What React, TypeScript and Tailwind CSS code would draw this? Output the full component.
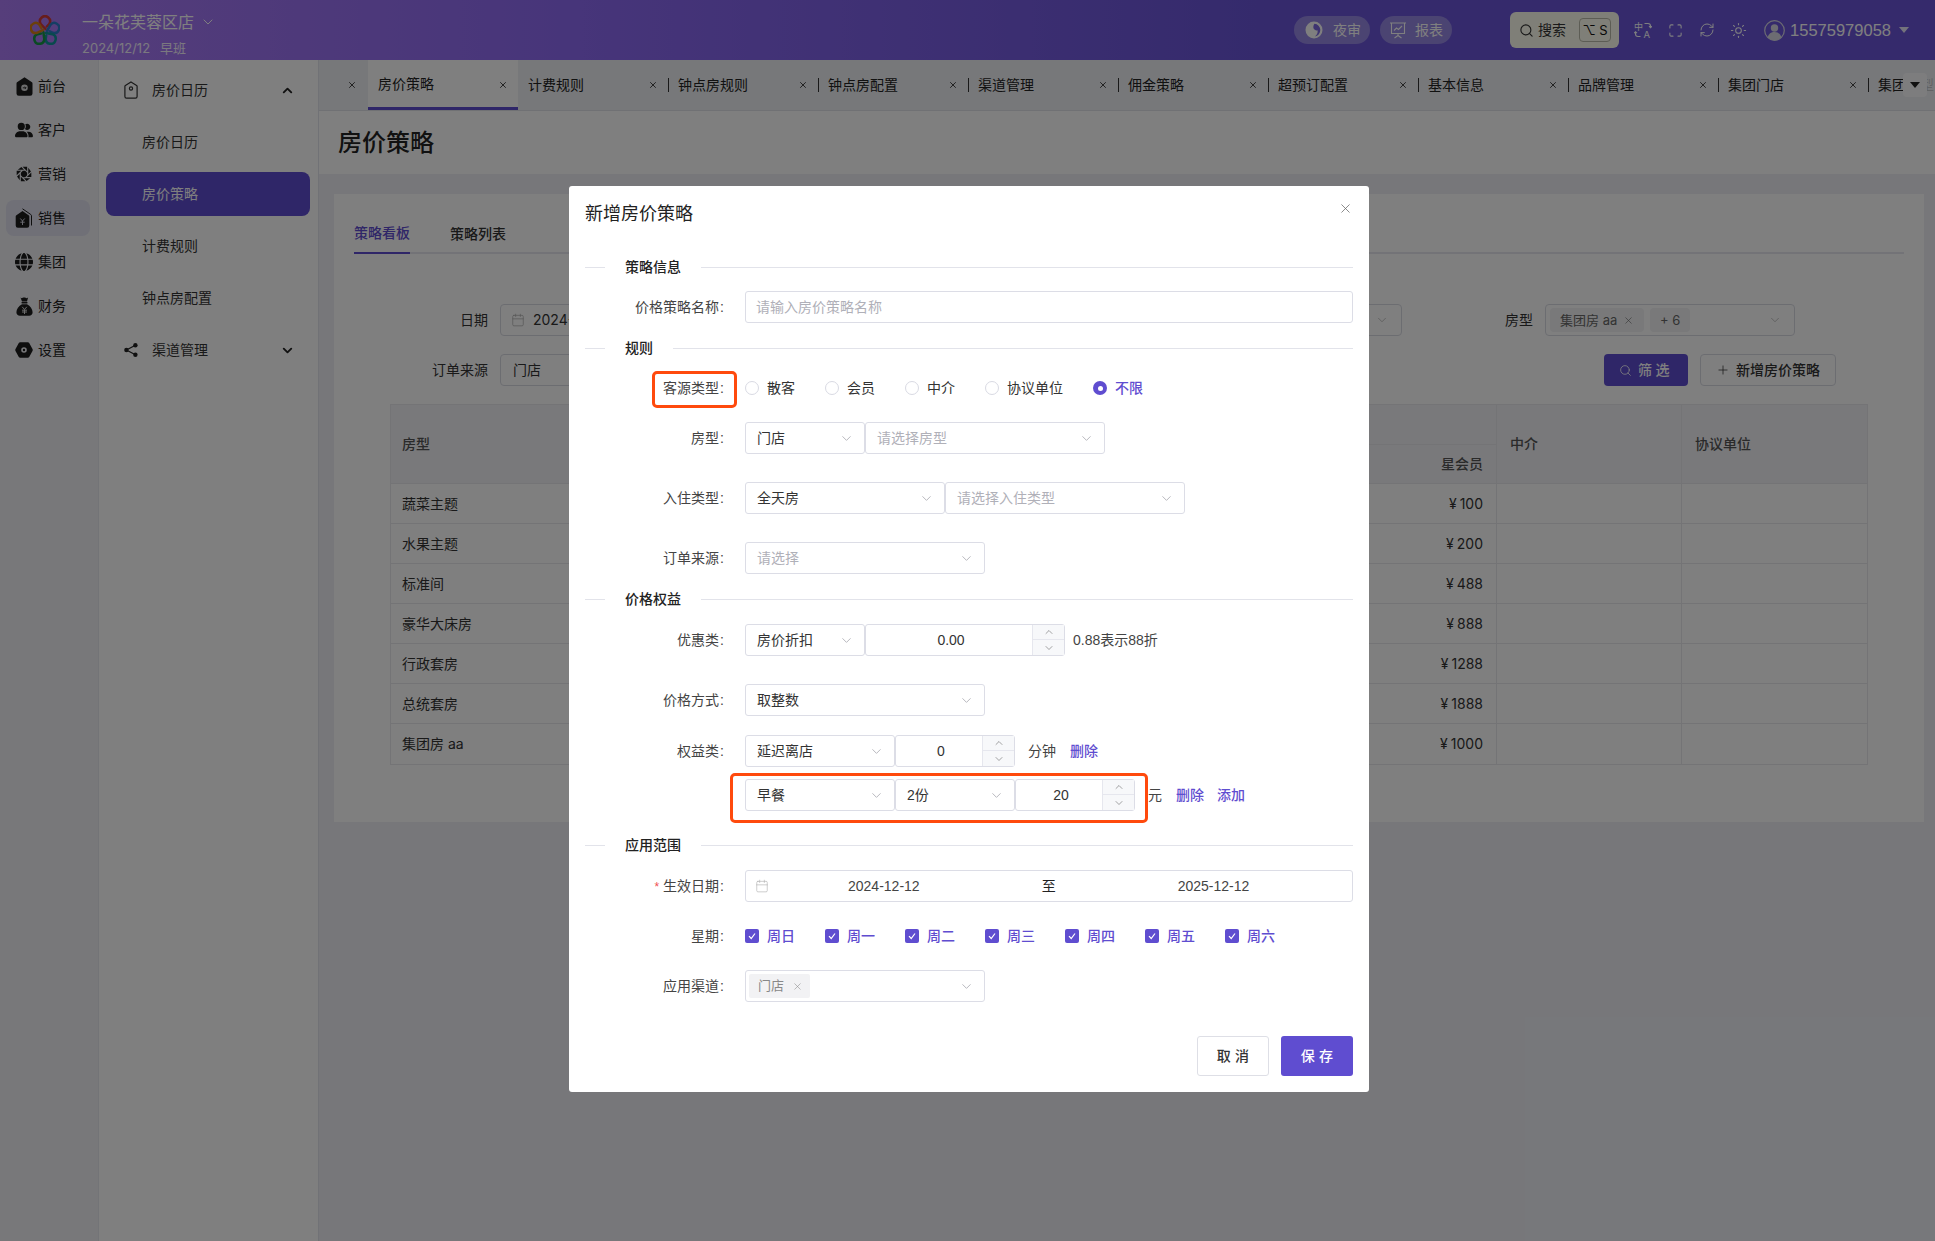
import React from "react";
import { ChevronDown, ChevronUp, Calendar, Maximize, RefreshCw, Sun, Search, X, Plus } from "lucide-react";
import { FaUserGroup, FaGlobe } from "react-icons/fa6";
import { IoApertureSharp } from "react-icons/io5";

function Logo() {
  const colors = ["#d03a38", "#2a7cc8", "#10929a", "#159446", "#d67f1a"];
  return (
    <svg width="30" height="30" viewBox="0 0 30 30" fill="none">
      {colors.map((c, i) => (
        <path key={c} transform={`rotate(${i * 72} 15 16)`} d="M15.500 14 10.800 9A5 5 0 1 1 19.200 9L16.800 11.500" stroke={c} strokeWidth="2.500" strokeLinecap="round" />
      ))}
    </svg>
  );
}

function HomeTag() {
  return (
    <svg width="17" height="19" viewBox="0 0 17 19" fill="#1c1c1c">
      <path d="M8.500 0.300 15.600 5a1.600 1.600 0 0 1 .9 1.400V16.500a2.300 2.300 0 0 1-2.300 2.300H2.800A2.300 2.300 0 0 1 .5 16.500V6.400A1.600 1.600 0 0 1 1.400 5Z" />
      <circle cx="8.500" cy="10.800" r="3.300" fill="#d8d8d8" />
      <path d="M6.800 10.800h3M8.800 9.600l1.200 1.200-1.200 1.200" stroke="#1c1c1c" strokeWidth=".9" fill="none" />
    </svg>
  );
}

function SaleTag() {
  return (
    <svg width="18" height="20" viewBox="0 0 18 20" fill="#1c1c1c">
      <path d="M7.500 3 13.600 7.200a1.500 1.500 0 0 1 .7 1.300V17.500a2.200 2.200 0 0 1-2.200 2.200H2.900A2.200 2.200 0 0 1 .7 17.500V8.500a1.500 1.500 0 0 1 .7-1.300Z" />
      <path d="M7.500 .8 15.800 6.500a1.500 1.500 0 0 1 .7 1.300V17.500" stroke="#1c1c1c" strokeWidth="1" fill="none" />
      <path d="M5.300 10.500 7.500 13l2.200-2.500M5.300 14.200h4.400M7.500 13v4" stroke="#d0d0dc" strokeWidth="1" fill="none" />
    </svg>
  );
}

function MoneyBag() {
  return (
    <svg width="17" height="19" viewBox="0 0 17 19" fill="#1c1c1c">
      <path d="M4.500.6c1 .7 1.500.7 2.100.2.900-.5 2.100-.5 3 0 .6.500 1.300.5 2.500-.2L11 4.500H6Z" />
      <rect x="5.400" y="5" width="6.200" height="1.500" rx=".7" />
      <path d="M6 7.300h5c3.300 1.800 5.600 4.800 5.600 8 0 2.200-1.500 3.400-3.500 3.400H3.900c-2 0-3.500-1.200-3.500-3.400 0-3.200 2.300-6.200 5.600-8Z" />
      <path d="M6.200 9.800 8.500 12.500l2.300-2.700M6 13.200h5M6 15h5M8.500 12.500V17" stroke="#d8d8d8" strokeWidth="1" fill="none" />
    </svg>
  );
}

function Hex() {
  return (
    <svg width="18" height="16" viewBox="0 0 18 16">
      <path fillRule="evenodd" fill="#1c1c1c" d="M5.200.3h7.600c.6 0 1.100.3 1.400.8l3.300 5.800c.4.700.4 1.500 0 2.200l-3.300 5.800c-.3.500-.8.800-1.400.8H5.200c-.6 0-1.100-.3-1.400-.8L.5 9.100c-.4-.7-.4-1.500 0-2.200L3.800 1.100c.3-.5.8-.8 1.400-.8ZM9 5.200a2.800 2.800 0 1 0 0 5.600 2.800 2.800 0 0 0 0-5.600Z" />
      <circle cx="9" cy="8" r="1.200" fill="#1c1c1c" />
    </svg>
  );
}

function OutlineTag() {
  return (
    <svg width="14" height="18" viewBox="0 0 14 18" fill="none" stroke="#333" strokeWidth="1.200">
      <path d="M7 1l5.600 3.400c.3.200.5.500.5.900V15.500a1.600 1.600 0 0 1-1.600 1.600h-9A1.600 1.600 0 0 1 .9 15.500V5.300c0-.4.200-.7.500-.9Z" />
      <circle cx="7" cy="7.500" r="1.600" />
    </svg>
  );
}

function ShareIcon() {
  return (
    <svg width="14" height="14" viewBox="0 0 14 14" fill="#222">
      <circle cx="2.400" cy="7" r="2.200" />
      <circle cx="11.400" cy="2.200" r="2.200" />
      <circle cx="11.400" cy="11.800" r="2.200" />
      <path d="M2.400 7 11.400 2.200M2.400 7l9 4.800" stroke="#222" strokeWidth="1.300" />
    </svg>
  );
}

function NightIcon() {
  return (
    <svg width="18" height="18" viewBox="0 0 18 18">
      <circle cx="9" cy="9" r="8.500" fill="#fff" />
      <path d="M9.500 2.700a6.400 6.400 0 0 1 .4 12.700c1.800-1.200 3.100-3.500 2.700-6.200C11 9.800 9.500 9 8.600 7.600 8 6 8.500 4 9.500 2.700Z" fill="#7d69e0" />
    </svg>
  );
}

function ReportIcon() {
  return (
    <svg width="18" height="18" viewBox="0 0 18 18" fill="none" stroke="#fff" strokeWidth="1.100">
      <path d="M1 2h16M2.500 2v10.500h13V2M9 12.500v2M5.500 17 9 14.500 12.500 17" />
      <path d="M5 9.500 7.500 7l2 1.500L13 5" />
    </svg>
  );
}

function TranslateIcon() {
  return (
    <svg width="18" height="18" viewBox="0 0 18 18" fill="none" stroke="#fff" strokeWidth="1.100">
      <text x="0" y="8.500" fontSize="9" fill="#fff" stroke="none">中</text>
      <text x="9.500" y="17" fontSize="9.500" fill="#fff" stroke="none">A</text>
      <path d="M10.500 2.500h3.500c1.500 0 2.500 1 2.500 2.500v1.500M15 5.200l1.500 1.500L18 5.200" />
      <path d="M6.500 15.500H4c-1.500 0-2.500-1-2.500-2.500v-2M0 12.200l1.500-1.500L3 12.200" />
    </svg>
  );
}

function Avatar() {
  return (
    <svg width="21" height="21" viewBox="0 0 21 21" fill="none">
      <circle cx="10.500" cy="10.500" r="9.800" stroke="#d8d8e4" strokeWidth="1.200" />
      <circle cx="10.500" cy="8" r="3.700" fill="#d8d8e4" />
      <path d="M3.700 17.500c.7-3.700 3.500-5.500 6.800-5.500s6.100 1.800 6.800 5.500a9.400 9.400 0 0 1-13.600 0Z" fill="#d8d8e4" />
    </svg>
  );
}

const railItems: { label: string; icon: React.ReactNode; active?: boolean }[] = [
  { label: "前台", icon: <HomeTag /> },
  { label: "客户", icon: <FaUserGroup size={18} color="#1c1c1c" /> },
  { label: "营销", icon: <IoApertureSharp size={20} color="#1c1c1c" /> },
  { label: "销售", icon: <SaleTag />, active: true },
  { label: "集团", icon: <FaGlobe size={18} color="#1c1c1c" /> },
  { label: "财务", icon: <MoneyBag /> },
  { label: "设置", icon: <Hex /> },
];

function Rail() {
  return (
    <aside className="w-[99px] shrink-0 bg-[#f0f1f5] border-r border-[#e6e8ee] pt-1 flex flex-col">
      {railItems.map((it) => (
        <div key={it.label} className="h-11 flex items-center pl-[6px]">
          <div className={`w-[84px] h-9 rounded-lg flex items-center ${it.active ? "bg-[#e0e0ef]" : ""}`}>
            <span className="w-[18px] ml-[9px] flex justify-center shrink-0">{it.icon}</span>
            <span className="ml-[5px] text-sm text-[#222]">{it.label}</span>
          </div>
        </div>
      ))}
    </aside>
  );
}

function SubNav() {
  const Sub = ({ label, active }: { label: string; active?: boolean }) => (
    <div className={`h-11 mt-2 ml-[7px] w-[204px] rounded-lg flex items-center pl-9 text-sm ${active ? "bg-[#5f4dd0] text-white" : "text-[#333]"}`}>{label}</div>
  );
  return (
    <aside className="w-[220px] shrink-0 bg-white border-r border-[#e3e5ec] pt-1">
      <div className="h-[44px] mt-1 flex items-center text-sm text-[#333]">
        <span className="w-[14px] ml-[25px] flex justify-center"><OutlineTag /></span>
        <span className="ml-[14px]">房价日历</span>
        <ChevronUp size={15} strokeWidth={3} className="ml-[72px] text-[#222]" />
      </div>
      <Sub label="房价日历" />
      <Sub label="房价策略" active />
      <Sub label="计费规则" />
      <Sub label="钟点房配置" />
      <div className="h-11 mt-2 flex items-center text-sm text-[#333]">
        <span className="w-[14px] ml-[25px] flex justify-center"><ShareIcon /></span>
        <span className="ml-[14px]">渠道管理</span>
        <ChevronDown size={15} strokeWidth={3} className="ml-[72px] text-[#222]" />
      </div>
    </aside>
  );
}

function Header() {
  return (
    <header className="h-[60px] shrink-0 flex items-center bg-linear-to-r from-[#ac7cf6] via-[#8e6af4] via-30% to-[#6a55d9] to-65% text-white">
      <div className="ml-[30px] w-[30px] shrink-0"><Logo /></div>
      <div className="ml-[22px] mt-2">
        <div className="flex items-center text-base leading-[22px] text-white">
          一朵花芙蓉区店
          <ChevronDown size={16} strokeWidth={1.500} className="ml-[6px]" />
        </div>
        <div className="mt-[6px] text-[13px] leading-[18px] text-white/90">2024/12/12<span className="ml-[10px]">早班</span></div>
      </div>
      <div className="ml-auto flex items-center">
        <div className="w-[76px] h-7 rounded-full bg-white/30 flex items-center pl-[11px] text-sm text-white">
          <NightIcon /><span className="ml-[10px]">夜审</span>
        </div>
        <div className="ml-[10px] w-[72px] h-7 rounded-full bg-white/30 flex items-center pl-[9px] text-sm text-white">
          <ReportIcon /><span className="ml-[8px]">报表</span>
        </div>
        <div className="ml-[58px] w-[109px] h-9 rounded-md bg-[#fffff0] flex items-center pl-[9px] text-sm text-[#333]">
          <Search size={15} strokeWidth={1.800} />
          <span className="ml-1">搜索</span>
          <span className="ml-[13px] w-8 h-6 rounded border border-[#bbbbaa] flex items-center justify-center text-[13px] text-[#111]">⌥ S</span>
        </div>
        <span className="ml-[15px] flex"><TranslateIcon /></span>
        <Maximize size={15} strokeWidth={1.700} className="ml-[16px] text-white" />
        <RefreshCw size={16} strokeWidth={1.500} className="ml-4 text-white" />
        <Sun size={17} strokeWidth={1.500} className="ml-[15px] text-white" />
        <span className="ml-[17px] flex"><Avatar /></span>
        <span className="ml-[5px] text-[16.500px] font-['Liberation_Sans',sans-serif] text-white">15575979058</span>
        <span className="ml-2 mr-[26px] w-0 h-0 border-x-[5px] border-x-transparent border-t-[6px] border-t-white/85" />
      </div>
    </header>
  );
}

const tabs = ["房价策略", "计费规则", "钟点房规则", "钟点房配置", "渠道管理", "佣金策略", "超预订配置", "基本信息", "品牌管理", "集团门店", "集团房型"];

function TabBar() {
  return (
    <div className="relative h-[51px] shrink-0 bg-[#eef0f4] border-b border-[#e0e2e8] flex overflow-hidden">
      <div className="w-[49px] shrink-0 flex items-center justify-end pr-[11px]"><X size={10} strokeWidth={2} className="text-[#222]" /></div>
      {tabs.map((t, i) => (
        <div key={t} className={`relative w-[150px] shrink-0 h-[50px] flex items-center pl-[10px] text-sm text-[#222] ${i === 0 ? "bg-white border-b-[3px] border-[#5f4dd0]" : ""}`}>
          {i > 1 && <span className="absolute left-0 top-[18px] h-[14px] w-px bg-[#333]" />}
          <span>{t}</span>
          <X size={10} strokeWidth={2} className="absolute left-[130px] top-5 text-[#222]" />
        </div>
      ))}
      <div className="absolute left-[1608px] top-0 right-0 h-[50px] bg-[#eef0f4]/80" />
      <div className="absolute left-[1584px] top-[13px] w-6 h-6 rounded bg-[#fbfbfc] flex items-center justify-center">
        <span className="w-0 h-0 border-x-[5px] border-x-transparent border-t-[6px] border-t-[#222]" />
      </div>
    </div>
  );
}

const rows = [
  ["蔬菜主题", "100"],
  ["水果主题", "200"],
  ["标准间", "488"],
  ["豪华大床房", "888"],
  ["行政套房", "1288"],
  ["总统套房", "1888"],
  ["集团房 aa", "1000"],
];

function PageSelect({ className, children }: { className: string; children?: React.ReactNode }) {
  return <div className={`h-8 rounded border border-[#d9dbe3] flex items-center text-sm text-[#333] ${className}`}>{children}</div>;
}

function Card() {
  return (
    <div className="mt-5 ml-[15px] mr-[11px] bg-white px-0 pt-5 pb-[57px]">
      <div className="mx-5 h-10 flex border-b-2 border-[#e6e7ef] text-sm">
        <div className="w-14 h-10 border-b-2 border-[#5f4dd0] text-[#5f4dd0] font-medium flex items-center">策略看板</div>
        <div className="ml-10 h-10 text-[#333] font-medium flex items-center">策略列表</div>
      </div>

      <div className="mt-[50px] flex items-center">
        <div className="w-[154px] text-right text-sm text-[#333]">日期</div>
        <PageSelect className="ml-3 w-[400px] pl-[10px] text-[#333]">
          <Calendar size={14} strokeWidth={1.200} className="text-[#aaa]" />
          <span className="ml-2">2024-12-12</span>
        </PageSelect>
        <PageSelect className="ml-[100px] w-[402px] justify-end pr-3"><ChevronDown size={14} strokeWidth={1.200} className="text-[#aaa]" /></PageSelect>
        <div className="w-[131px] text-right text-sm text-[#333]">房型</div>
        <PageSelect className="ml-3 w-[250px] pl-1 pr-[12px] text-[#666]">
          <span className="h-6 px-[10px] rounded-sm bg-[#f2f3f5] flex items-center text-[13px]">集团房 aa<X size={11} strokeWidth={1.300} className="ml-[6px]" /></span>
          <span className="ml-[6px] h-6 w-10 justify-center rounded-sm bg-[#f2f3f5] flex items-center text-[13px]">+ 6</span>
          <ChevronDown size={14} strokeWidth={1.200} className="ml-auto text-[#aaa]" />
        </PageSelect>
      </div>

      <div className="mt-[18px] flex items-center">
        <div className="w-[154px] text-right text-sm text-[#333]">订单来源</div>
        <PageSelect className="ml-3 w-[400px] pl-[12px]">门店</PageSelect>
        <button className="ml-auto w-[84px] h-8 rounded bg-[#5f4dd0] text-white text-sm font-medium flex items-center justify-center">
          <Search size={13} strokeWidth={1.500} /><span className="ml-[6px] tracking-[0.25em]">筛选</span>
        </button>
        <button className="ml-3 mr-[88px] w-[136px] h-8 rounded border border-[#d9dbe3] text-[#333] text-sm font-medium flex items-center justify-center">
          <Plus size={14} strokeWidth={1.300} /><span className="ml-[6px]">新增房价策略</span>
        </button>
      </div>

      <div className="mt-[18px] ml-[56px] mr-[56px] border border-[#e8e9ed] text-sm">
        <div className="h-[79px] grid grid-cols-[200px_906px_185px_1fr] bg-[#f2f3f6] border-b border-[#e8e9ed] text-[#555] font-medium">
          <div className="flex items-center pl-[11px]">房型</div>
          <div className="border-r border-[#e8e9ed] flex flex-col">
            <div className="h-10 border-b border-[#e8e9ed]" />
            <div className="flex-1 flex items-center justify-end pr-[13px]">星会员</div>
          </div>
          <div className="border-r border-[#e8e9ed] flex items-center pl-[13px]">中介</div>
          <div className="flex items-center pl-[13px]">协议单位</div>
        </div>
        {rows.map(([n, p]) => (
          <div key={n} className="h-10 grid grid-cols-[200px_906px_185px_1fr] border-b border-[#e8e9ed] last:border-b-0 text-[#333]">
            <div className="flex items-center pl-[11px]">{n}</div>
            <div className="border-r border-[#e8e9ed] flex items-center justify-end pr-[13px]">¥<span className="ml-[3px]">{p}</span></div>
            <div className="border-r border-[#e8e9ed]" />
            <div />
          </div>
        ))}
      </div>
    </div>
  );
}

const Chevron = () => <ChevronDown size={15} strokeWidth={1.200} className="ml-auto shrink-0 text-[#a0a0a8]" />;

function Select({ w, value, placeholder }: { w: string; value?: string; placeholder?: string }) {
  return (
    <div className={`${w} h-8 shrink-0 rounded-[3px] border border-[#dcdde6] bg-white flex items-center pl-[11px] pr-[10px] text-sm ${value ? "text-[#333]" : "text-[#b0b0b8]"}`}>
      <span>{value ?? placeholder}</span>
      <Chevron />
    </div>
  );
}

function NumberInput({ w, value }: { w: string; value: string }) {
  return (
    <div className={`${w} h-8 shrink-0 rounded-[3px] border border-[#dcdde6] bg-white flex text-sm text-[#333]`}>
      <div className="flex-1 flex items-center justify-center pl-1">{value}</div>
      <div className="w-8 border-l border-[#e6e7ee] bg-[#f7f8fa] flex flex-col text-[#666]">
        <div className="h-[15px] border-b border-[#e6e7ee] flex items-center justify-center"><ChevronUp size={12} strokeWidth={1.200} /></div>
        <div className="flex-1 flex items-center justify-center"><ChevronDown size={12} strokeWidth={1.200} /></div>
      </div>
    </div>
  );
}

function Divider({ title, className }: { title: string; className: string }) {
  return (
    <div className={`h-[22px] flex items-center text-sm font-medium text-[#222] ${className}`}>
      <span className="w-5 h-px bg-[#e2e3ea]" />
      <span className="mx-5">{title}</span>
      <span className="flex-1 h-px bg-[#e2e3ea]" />
    </div>
  );
}

function Row({ label, required, className, children }: { label: string; required?: boolean; className: string; children: React.ReactNode }) {
  return (
    <div className={`h-8 flex items-center ${className}`}>
      <div className="w-[139px] shrink-0 text-right text-sm text-[#444]">
        {required && <span className="text-[#f05050] mr-1 text-xs">*</span>}
        {label}
        {label && <span className="ml-px">:</span>}
      </div>
      <div className="ml-[21px] flex-1 flex items-center">{children}</div>
    </div>
  );
}

function Radio({ label, checked }: { label: string; checked?: boolean }) {
  return (
    <div className="flex items-center mr-[30px] text-sm">
      {checked ? (
        <span className="w-[14px] h-[14px] rounded-full bg-[#5f4dd0] flex items-center justify-center"><span className="w-[5px] h-[5px] rounded-full bg-white" /></span>
      ) : (
        <span className="w-[14px] h-[14px] rounded-full border border-[#d9dae3] bg-white" />
      )}
      <span className={`ml-2 ${checked ? "text-[#5f4dd0] font-medium" : "text-[#333]"}`}>{label}</span>
    </div>
  );
}

function Check({ label }: { label: string }) {
  return (
    <div className="flex items-center mr-[30px] text-sm text-[#5f4dd0] font-medium">
      <span className="w-[14px] h-[14px] rounded-[2px] bg-[#5f4dd0] flex items-center justify-center">
        <svg width="10" height="10" viewBox="0 0 10 10" fill="none"><path d="M2 5.200 4.200 7.500 8 2.500" stroke="#fff" strokeWidth="1.200" /></svg>
      </span>
      <span className="ml-2">{label}</span>
    </div>
  );
}

function Modal() {
  return (
    <div className="relative w-[800px] bg-white rounded-[3px] px-4 pb-4 text-[#333] font-['Liberation_Sans','Noto_Sans_CJK_SC',sans-serif]">
      <div className="h-[56px] flex items-center text-lg text-[#222]">新增房价策略</div>
      <X size={15} strokeWidth={1.200} className="absolute left-[769px] top-[15px] text-[#666]" />

      <Divider title="策略信息" className="mt-[14px]" />
      <Row label="价格策略名称" className="mt-[13px]">
        <div className="flex-1 h-8 rounded-[3px] border border-[#dcdde6] flex items-center pl-[10px] text-sm text-[#b0b0b8]">请输入房价策略名称</div>
      </Row>

      <Divider title="规则" className="mt-[14px]" />
      <Row label="客源类型" className="mt-[13px]">
        <Radio label="散客" />
        <Radio label="会员" />
        <Radio label="中介" />
        <Radio label="协议单位" />
        <Radio label="不限" checked />
      </Row>
      <Row label="房型" className="mt-[18px]">
        <Select w="w-[120px]" value="门店" />
        <Select w="w-[240px]" placeholder="请选择房型" />
      </Row>
      <Row label="入住类型" className="mt-[28px]">
        <Select w="w-[200px]" value="全天房" />
        <Select w="w-[240px]" placeholder="请选择入住类型" />
      </Row>
      <Row label="订单来源" className="mt-[28px]">
        <Select w="w-[240px]" placeholder="请选择" />
      </Row>

      <Divider title="价格权益" className="mt-[14px]" />
      <Row label="优惠类" className="mt-[14px]">
        <Select w="w-[120px]" value="房价折扣" />
        <NumberInput w="w-[200px]" value="0.00" />
        <span className="ml-2 text-sm text-[#444]">0.88表示88折</span>
      </Row>
      <Row label="价格方式" className="mt-[28px]">
        <Select w="w-[240px]" value="取整数" />
      </Row>
      <Row label="权益类" className="mt-[19px]">
        <Select w="w-[150px]" value="延迟离店" />
        <NumberInput w="w-[120px]" value="0" />
        <span className="ml-[13px] text-sm text-[#444]">分钟</span>
        <span className="ml-[14px] text-sm text-[#5f4dd0] font-medium">删除</span>
      </Row>
      <Row label="" className="mt-3">
        <Select w="w-[150px]" value="早餐" />
        <Select w="w-[120px]" value="2份" />
        <NumberInput w="w-[120px]" value="20" />
        <span className="ml-[13px] text-sm text-[#444]">元</span>
        <span className="ml-[14px] text-sm text-[#5f4dd0] font-medium">删除</span>
        <span className="ml-[13px] text-sm text-[#5f4dd0] font-medium">添加</span>
      </Row>

      <Divider title="应用范围" className="mt-[23px]" />
      <Row label="生效日期" required className="mt-[14px]">
        <div className="flex-1 h-8 rounded-[3px] border border-[#dcdde6] flex items-center text-sm text-[#444]">
          <Calendar size={14} strokeWidth={1} className="ml-[9px] text-[#aaa]" />
          <span className="ml-[79px]">2024-12-12</span>
          <span className="ml-[122px] text-[#222]">至</span>
          <span className="ml-[122px]">2025-12-12</span>
        </div>
      </Row>
      <Row label="星期" className="mt-[18px]">
        {["周日", "周一", "周二", "周三", "周四", "周五", "周六"].map((d) => <Check key={d} label={d} />)}
      </Row>
      <Row label="应用渠道" className="mt-[18px]">
        <div className="w-[240px] h-8 rounded-[3px] border border-[#dcdde6] flex items-center pl-[3px] pr-[10px]">
          <span className="h-6 w-[61px] rounded-[2px] bg-[#f2f2f4] flex items-center pl-[9px] text-[13px] text-[#888]">门店<X size={11} strokeWidth={1.200} className="ml-[8px]" /></span>
          <Chevron />
        </div>
      </Row>

      <div className="mt-[34px] flex justify-end">
        <button className="w-[72px] h-10 rounded-[3px] border border-[#dedfe6] bg-white text-sm font-medium tracking-[0.3em] pl-1 text-[#333]">取消</button>
        <button className="ml-[12px] w-[72px] h-10 rounded-[3px] bg-[#5f4dd0] text-sm font-medium tracking-[0.3em] pl-1 text-white">保存</button>
      </div>

      <div className="absolute left-[83px] top-[185px] w-[85px] h-[37px] rounded-[5px] border-[3px] border-[#ff4a0d]" />
      <div className="absolute left-[161px] top-[587px] w-[418px] h-[50px] rounded-[5px] border-[3px] border-[#ff4a0d]" />
    </div>
  );
}

export default function App() {
  return (
    <div className="relative h-screen w-full overflow-hidden bg-[#eeeff5] font-['Inter','Noto_Sans_CJK_SC',sans-serif] flex flex-col">
      <Header />
      <div className="flex-1 flex min-h-0">
        <Rail />
        <SubNav />
        <main className="flex-1 min-w-0 flex flex-col">
          <TabBar />
          <div className="h-[63px] shrink-0 bg-white flex items-center pl-[19px] text-2xl font-medium text-[#222]">房价策略</div>
          <Card />
        </main>
      </div>
      <div className="absolute inset-0 bg-black/50 pl-[569px] pt-[186px]">
        <Modal />
      </div>
    </div>
  );
}
